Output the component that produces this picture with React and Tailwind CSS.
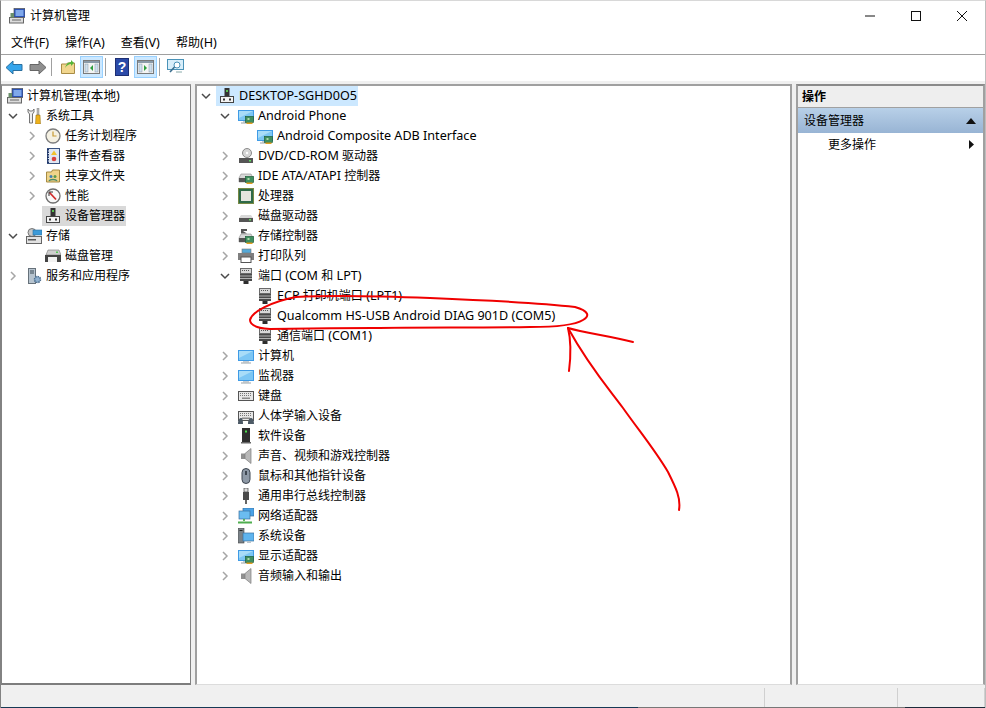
// App.jsx - 计算机管理 / 设备管理器
const Chevron = ({ open }) =>
  open ? (
    <svg width="10" height="10" viewBox="0 0 10 10" className="shrink-0">
      <path d="M1 3l4 4 4-4" fill="none" stroke="#4a4a4a" strokeWidth="1.5" />
    </svg>
  ) : (
    <svg width="10" height="10" viewBox="0 0 10 10" className="shrink-0">
      <path d="M3 1l4 4-4 4" fill="none" stroke="#a6a6a6" strokeWidth="1.5" />
    </svg>
  )

const Chip = () => (
  <g>
    <rect x="7.500" y="8.500" width="8" height="6" fill="#3f8f5f" stroke="#1f5f3a" strokeWidth=".7" />
    <rect x="8.500" y="14.500" width="6" height="1.500" fill="#e0a020" />
    <rect x="9.500" y="10" width="2" height="2" fill="#a8d8a8" />
  </g>
)

const Screen = () => (
  <g>
    <rect x="0" y="2" width="16" height="11" fill="#3f9be6" />
    <rect x="1" y="3" width="14" height="9" fill="#7cc6f4" />
    <path d="M1 3h14L1 10z" fill="#a8dcf8" />
    <rect x="5" y="13" width="6" height="1.500" fill="#c3ccd2" />
    <rect x="3" y="14.500" width="10" height="1" fill="#9aa3aa" />
  </g>
)

const Port = () => (
  <g>
    <rect x="2.500" y=".5" width="11" height="5" fill="#d8d8d8" stroke="#6a6a6a" />
    <path d="M4 2.500h8" stroke="#555" strokeDasharray="1 1" />
    <rect x="2" y="6" width="12" height="7" fill="#4a4a4a" />
    <path d="M2 8h12M2 10.500h12" stroke="#b0b0b0" />
    <rect x="5.500" y="13" width="5" height="3" fill="#2e2e2e" />
  </g>
)

const Host = () => (
  <g>
    <rect x="5.500" y="0" width="5" height="8" fill="#333" />
    <rect x="7" y="2" width="2" height="2" fill="#58c050" />
    <rect x="1.500" y="8.500" width="13" height="6" fill="#f4f4f4" stroke="#444" />
    <rect x="4" y="10.500" width="2" height="2" fill="#333" />
    <rect x="10" y="10.500" width="2" height="2" fill="#333" />
  </g>
)

const Drive = () => (
  <g>
    <path d="M3 6h10l2 4v4H1v-4z" fill="#d8d8d8" stroke="#8a8a8a" strokeWidth=".6" />
    <rect x="1" y="10" width="14" height="4" fill="#555" />
    <rect x="11" y="11" width="2" height="1.500" fill="#5fdc5f" />
  </g>
)

const Speaker = () => (
  <g>
    <rect x="3" y="5.500" width="4" height="5.500" fill="#8f8f8f" />
    <path d="M7 5.500l6-5v15l-6-5z" fill="#b8b8b8" stroke="#7d7d7d" strokeWidth=".7" />
  </g>
)

const Keys = () => (
  <g>
    <rect x=".5" y="3.500" width="15" height="9" fill="#e6e6e6" stroke="#555" />
    <path d="M2 5.500h12M2 7.500h12" stroke="#777" strokeDasharray="1 1" />
    <rect x="4" y="9.500" width="8" height="1.500" fill="#8a8a8a" />
  </g>
)

const shapes = {
  computer: (
    <g>
      <rect x="5" y=".5" width="11" height="9" fill="#2a52b8" stroke="#555" strokeWidth=".7" />
      <rect x="6.500" y="2" width="8" height="6" fill="#7fa8ea" />
      <rect x=".5" y="9.500" width="14" height="5.500" fill="#dcdcdc" stroke="#666" />
      <rect x="1.500" y="5" width="3.500" height="4.500" fill="#6a8f6a" />
      <rect x="3" y="11.500" width="9" height="1" fill="#666" />
    </g>
  ),
  tools: (
    <g>
      <path d="M2 1v3l1.500 2v9h3V6L8 4V1L6.500 3h-3z" fill="#eee" stroke="#666" strokeWidth=".9" />
      <rect x="11" y="0" width="2" height="7" fill="#b8b8b8" stroke="#777" strokeWidth=".4" />
      <path d="M10 7h4l.5 9h-5z" fill="#eeb11b" stroke="#8f6a10" strokeWidth=".5" />
    </g>
  ),
  clock: (
    <g>
      <circle cx="8" cy="8" r="7" fill="#f4f0e2" stroke="#7d7d7d" strokeWidth="1.3" />
      <path d="M8 3.500V8h3.500" fill="none" stroke="#c79a32" strokeWidth="1.200" />
    </g>
  ),
  log: (
    <g>
      <rect x="2.500" y=".5" width="12" height="15" fill="#dfe7f3" stroke="#39527f" />
      <path d="M3 1v14" stroke="#1f3569" strokeWidth="2" strokeDasharray="1.500 1" />
      <path d="M9 2.500l3 4.500H6z" fill="#f1c22e" />
      <circle cx="9" cy="11" r="2.300" fill="#d9433f" />
    </g>
  ),
  share: (
    <g>
      <path d="M1.500 4h5l1-2h7v12h-13z" fill="#efd48a" stroke="#a58a42" />
      <circle cx="6" cy="8.500" r="1.500" fill="#3f7fb5" />
      <circle cx="10" cy="8.500" r="1.500" fill="#5a9a4a" />
      <path d="M4 13c1-2 7-2 8 0" fill="none" stroke="#4a8a6a" strokeWidth="1.400" />
    </g>
  ),
  perf: (
    <g>
      <circle cx="8" cy="8" r="7" fill="#f8f8f8" stroke="#6e6e6e" strokeWidth="1.300" />
      <path d="M4.500 4.500l6.500 7" stroke="#d02b2b" strokeWidth="1.800" />
      <path d="M4 8V4h4" fill="none" stroke="#333" />
    </g>
  ),
  host: <Host />,
  storage: (
    <g>
      <circle cx="6" cy="4.500" r="4" fill="#c8c8c8" stroke="#777" />
      <rect x="7" y="2" width="9" height="5" fill="#3d9ad8" stroke="#2d6f9f" strokeWidth=".6" />
      <rect x=".5" y="8.500" width="15" height="7" fill="#e2e2e2" stroke="#666" />
      <rect x="2" y="11" width="8" height="1.500" fill="#5a5a5a" />
    </g>
  ),
  disk: (
    <g>
      <path d="M3 2h11l2 5H1z" fill="#cfcfcf" stroke="#777" strokeWidth=".6" />
      <rect x="11" y="3.500" width="2" height="1.500" fill="#55c855" />
      <rect x="0" y="7" width="16" height="7" fill="#444" />
      <rect x="3" y="9" width="9" height="5" fill="#f2f2f2" />
    </g>
  ),
  services: (
    <g>
      <rect x="2.500" y=".5" width="7" height="15" fill="#b7c4cf" stroke="#66717a" />
      <path d="M4 3h4M4 5h4" stroke="#3a4a55" />
      <circle cx="11.500" cy="11.500" r="3" fill="#8fb0cf" stroke="#4d6f8f" strokeWidth="1.500" strokeDasharray="1.500 .8" />
    </g>
  ),
  adapter: (
    <g>
      <Screen />
      <Chip />
    </g>
  ),
  dvd: (
    <g>
      <circle cx="9" cy="5" r="4.500" fill="#d6d6d6" stroke="#8a8a8a" />
      <circle cx="9" cy="5" r="1.200" fill="#fff" />
      <rect x="1" y="10" width="14" height="5" fill="#555" />
      <rect x="11" y="12" width="2" height="1.500" fill="#5fdc5f" />
    </g>
  ),
  ide: (
    <g>
      <Drive />
      <Chip />
    </g>
  ),
  cpu: (
    <g>
      <rect x="0" y="0" width="16" height="16" fill="#2f6a48" />
      <rect x=".5" y=".5" width="15" height="15" fill="none" stroke="#c0a840" strokeDasharray="1 1" />
      <rect x="3" y="3" width="10" height="10" fill="#e4e4de" />
    </g>
  ),
  drive: (
    <g>
      <path d="M3 7h10l2 3v4H1v-4z" fill="#d8d8d8" />
      <rect x="1" y="10" width="14" height="4" fill="#555" />
      <rect x="11" y="11" width="2" height="1.500" fill="#5fdc5f" />
    </g>
  ),
  storagectl: (
    <g>
      <path d="M3 1h6v2H5l4 2.500H3z" fill="#555" />
      <Drive />
      <Chip />
    </g>
  ),
  printer: (
    <g>
      <rect x="4" y="1" width="9" height="4" fill="#55a9d8" stroke="#777" strokeWidth=".6" />
      <rect x="0" y="5" width="16" height="7" fill="#7f7f7f" />
      <rect x="3" y="9" width="10" height="5.500" fill="#fff" stroke="#555" />
    </g>
  ),
  port: <Port />,
  pc: <Screen />,
  monitor: <Screen />,
  keyboard: <Keys />,
  hid: (
    <g>
      <Keys />
      <path d="M0 16c0-5 2-6 3-6s2 1 2 6zM10 16c0-5 2-6 3-6s3 1 3 6z" fill="#4d5a66" />
    </g>
  ),
  soft: (
    <g>
      <rect x="4" y="0" width="8" height="14" fill="#2e2e2e" />
      <rect x="7" y="2.500" width="2" height="2" fill="#4be04b" />
      <rect x="3" y="14" width="10" height="1.500" fill="#666" />
    </g>
  ),
  speaker: <Speaker />,
  mouse: (
    <g>
      <rect x="4" y=".5" width="8" height="15" rx="4" fill="#8e99a6" stroke="#3e4650" />
      <rect x="7" y="3" width="2" height="4" fill="#3e4650" />
    </g>
  ),
  usb: (
    <g>
      <rect x="6" y="0" width="4" height="4" fill="#dcdcdc" stroke="#444" strokeWidth=".7" />
      <rect x="5" y="4" width="6" height="8" fill="#4a4a4a" />
      <rect x="7" y="12" width="2" height="4" fill="#666" />
    </g>
  ),
  network: (
    <g>
      <rect x="5" y="0" width="11" height="8" fill="#4aa3e8" stroke="#3a6f9f" strokeWidth=".7" />
      <rect x="1" y="3" width="11" height="8" fill="#6bbcf0" stroke="#3a6f9f" strokeWidth=".7" />
      <path d="M6 11v2M0 14.500h14" stroke="#4fae4f" strokeWidth="1.800" />
    </g>
  ),
  system: (
    <g>
      <rect x="0" y="0" width="6" height="15" fill="#7a8288" stroke="#444" strokeWidth=".6" />
      <rect x="1.500" y="2" width="3" height="1" fill="#222" />
      <rect x="5" y="5" width="11" height="8" fill="#5fb4ee" stroke="#3a6f9f" strokeWidth=".7" />
      <rect x="9" y="13" width="4" height="2" fill="#b9c4cc" />
    </g>
  ),
}

const Icon = ({ name }) => (
  <svg width="16" height="16" viewBox="0 0 16 16" className="shrink-0">
    {shapes[name]}
  </svg>
)

// the latin part of a label runs larger than the CJK part in the screenshot
const L = ({ children }) => <span className="text-[12.6px] leading-none">{children}</span>

const levels = { 1: 'pl-[23px]', 2: 'pl-[42px]' }
const sideLevels = { 0: 'pl-[5px]', 1: 'pl-[6px]', 2: 'pl-[25px]' }

function Row({ level, pad, open, leaf, noSlot, selected, icon, children }) {
  return (
    <div className={`flex h-5 items-center whitespace-nowrap ${pad[level]}`}>
      {!noSlot && <span className="flex w-[18px] shrink-0 items-center">{!leaf && <Chevron open={open} />}</span>}
      <span className={`flex h-5 items-center ${selected ? '-ml-[3px] bg-[#d9d9d9] pr-px pl-[3px]' : ''}`}>
        <Icon name={icon} />
        <span className="ml-1">{children}</span>
      </span>
    </div>
  )
}

const sideTree = [
  { level: 0, noSlot: true, icon: 'computer', text: <>计算机管理<L>(本地)</L></> },
  { level: 1, open: true, icon: 'tools', text: '系统工具' },
  { level: 2, icon: 'clock', text: '任务计划程序' },
  { level: 2, icon: 'log', text: '事件查看器' },
  { level: 2, icon: 'share', text: '共享文件夹' },
  { level: 2, icon: 'perf', text: '性能' },
  { level: 2, leaf: true, selected: true, icon: 'host', text: '设备管理器' },
  { level: 1, open: true, icon: 'storage', text: '存储' },
  { level: 2, leaf: true, icon: 'disk', text: '磁盘管理' },
  { level: 1, icon: 'services', text: '服务和应用程序' },
]

const devices = [
  { level: 1, open: true, icon: 'adapter', text: <L>Android Phone</L> },
  { level: 2, leaf: true, icon: 'adapter', text: <L>Android Composite ADB Interface</L> },
  { level: 1, icon: 'dvd', text: <><L>DVD/CD-ROM </L>驱动器</> },
  { level: 1, icon: 'ide', text: <><L>IDE ATA/ATAPI </L>控制器</> },
  { level: 1, icon: 'cpu', text: '处理器' },
  { level: 1, icon: 'drive', text: '磁盘驱动器' },
  { level: 1, icon: 'storagectl', text: '存储控制器' },
  { level: 1, icon: 'printer', text: '打印队列' },
  { level: 1, open: true, icon: 'port', text: <>端口<L> (COM </L>和<L> LPT)</L></> },
  { level: 2, leaf: true, icon: 'port', text: <><L>ECP </L>打印机端口<L> (LPT1)</L></> },
  { level: 2, leaf: true, icon: 'port', text: <L>Qualcomm HS-USB Android DIAG 901D (COM5)</L> },
  { level: 2, leaf: true, icon: 'port', text: <>通信端口<L> (COM1)</L></> },
  { level: 1, icon: 'pc', text: '计算机' },
  { level: 1, icon: 'monitor', text: '监视器' },
  { level: 1, icon: 'keyboard', text: '键盘' },
  { level: 1, icon: 'hid', text: '人体学输入设备' },
  { level: 1, icon: 'soft', text: '软件设备' },
  { level: 1, icon: 'speaker', text: '声音、视频和游戏控制器' },
  { level: 1, icon: 'mouse', text: '鼠标和其他指针设备' },
  { level: 1, icon: 'usb', text: '通用串行总线控制器' },
  { level: 1, icon: 'network', text: '网络适配器' },
  { level: 1, icon: 'system', text: '系统设备' },
  { level: 1, icon: 'adapter', text: '显示适配器' },
  { level: 1, icon: 'speaker', text: '音频输入和输出' },
]

const ToolBtn = ({ active, children }) => (
  <span
    className={`flex h-[22px] w-[23px] items-center justify-center border ${
      active ? 'border-[#99d1ff] bg-[#cce8ff]' : 'border-transparent'
    }`}
  >
    {children}
  </span>
)

const Sep = () => <span className="mt-[2px] mr-[3px] ml-px h-[18px] w-px bg-[#a0a0a0]" />

const PaneIcon = ({ right }) => (
  <svg width="17" height="16" viewBox="0 0 17 16">
    <rect x=".5" y="1.500" width="16" height="13" fill="#f4f4f4" stroke="#7a7a7a" />
    <rect x="1" y="2" width="15" height="2" fill="#8a9aa8" />
    <rect x="2" y="5" width="3" height="8" fill="#cfe0ee" stroke="#8a9aa8" strokeWidth=".5" />
    <rect x="12" y="5" width="3" height="8" fill="#cfe0ee" stroke="#8a9aa8" strokeWidth=".5" />
    <path d={right ? 'M7 6l3 3-3 3z' : 'M10 6l-3 3 3 3z'} fill="#2f9e3f" />
  </svg>
)

export default function App() {
  return (
    <div className="relative flex h-[708px] w-[986px] flex-col overflow-hidden border-t border-r border-l border-t-[#d8d8d8] border-r-[#bdbdbd] border-l-[#828282] bg-[#f0f0f0] font-['Noto_Sans','Noto_Sans_CJK_SC',sans-serif] text-xs leading-5 text-black">
      {/* title bar */}
      <div className="flex h-[30px] shrink-0 items-center bg-white pl-2">
        <Icon name="computer" />
        <span className="ml-[5px]">计算机管理</span>
        <div className="ml-auto flex items-center">
          <svg width="46" height="16" viewBox="0 0 46 16"><path d="M18 8h10" stroke="#111" /></svg>
          <svg width="46" height="16" viewBox="0 0 46 16"><rect x="18.500" y="3.500" width="9" height="9" fill="none" stroke="#111" /></svg>
          <svg width="46" height="16" viewBox="0 0 46 16"><path d="M18 3l10 10M28 3L18 13" stroke="#111" fill="none" /></svg>
        </div>
      </div>

      {/* menu */}
      <div className="flex h-6 shrink-0 items-center gap-4 border-b border-[#a0a0a0] bg-white pl-[10px]">
        <span>文件<L>(F)</L></span>
        <span>操作<L>(A)</L></span>
        <span>查看<L>(V)</L></span>
        <span>帮助<L>(H)</L></span>
      </div>

      {/* toolbar */}
      <div className="flex h-[26px] shrink-0 items-start gap-px bg-white pt-px pl-px">
        <ToolBtn>
          <svg width="18" height="15" viewBox="0 0 18 15"><path d="M1 7.500l7-6.500v3.500h9v6H8V14z" fill="#35a5ec" stroke="#2a6f9f" /></svg>
        </ToolBtn>
        <ToolBtn>
          <svg width="18" height="15" viewBox="0 0 18 15"><path d="M17 7.500L10 1v3.500H1v6h9V14z" fill="#8f8f8f" stroke="#666" /></svg>
        </ToolBtn>
        <Sep />
        <ToolBtn>
          <svg width="16" height="16" viewBox="0 0 16 16"><path d="M1.500 5h5l1-1h7v10.500h-13z" fill="#f1d68e" stroke="#a98c45" /><path d="M5 9c1-4 3-6 6-6V1l3 3-3 3V5c-2 0-4 1-6 4z" fill="#55b53a" /></svg>
        </ToolBtn>
        <ToolBtn active><PaneIcon /></ToolBtn>
        <Sep />
        <ToolBtn>
          <svg width="14" height="18" viewBox="0 0 14 18"><rect x=".5" y=".5" width="13" height="17" fill="#2b4aa8" stroke="#1d2f73" /><text x="7" y="14" textAnchor="middle" fontSize="14" fontWeight="700" fill="#fff" fontFamily="Liberation Sans">?</text></svg>
        </ToolBtn>
        <ToolBtn active><PaneIcon right /></ToolBtn>
        <Sep />
        <ToolBtn>
          <svg width="17" height="16" viewBox="0 0 17 16"><rect x=".5" y=".5" width="16" height="10" fill="#d8eefa" stroke="#4a93b8" /><circle cx="10" cy="6" r="3" fill="#fff" stroke="#4a93b8" /><path d="M7.500 8L3 13" stroke="#3b6f8f" strokeWidth="1.600" /><path d="M9 13h6" stroke="#8aa" /></svg>
        </ToolBtn>
      </div>

      {/* panes */}
      <div className="flex min-h-0 flex-1 gap-1 pt-[3px] pb-px">
        <div className="w-[190px] shrink-0 overflow-hidden border-t-2 border-r border-b-2 border-l border-t-[#a0a0a0] border-r-[#828282] border-b-[#7d7d7d] border-l-[#828282] bg-white">
          {sideTree.map((r, i) => (
            <Row key={i} pad={sideLevels} {...r}>
              {r.text}
            </Row>
          ))}
        </div>

        <div className="min-w-0 flex-1 border-x-2 border-t-2 border-b border-x-[#a0a0a0] border-t-[#a0a0a0] border-b-[#dcdcdc] bg-white">
          <div className="flex h-5 items-center pl-[4px] whitespace-nowrap">
            <span className="flex w-[15px] shrink-0 items-center"><Chevron open /></span>
            <span className="flex h-5 items-center bg-[#cce8ff] pr-px pl-[3px]">
              <Icon name="host" />
              <span className="ml-1"><L>DESKTOP-SGHD0O5</L></span>
            </span>
          </div>
          {devices.map((r, i) => (
            <Row key={i} pad={levels} {...r}>
              {r.text}
            </Row>
          ))}
        </div>

        <div className="flex w-[189px] shrink-0 flex-col border-x-2 border-t-2 border-b border-x-[#a0a0a0] border-t-[#8a8a8a] border-b-[#dcdcdc] bg-white">
          <div className="flex h-[22px] shrink-0 items-center border-b border-[#a0a0a0] bg-[#eeeeee] pl-[4px] font-bold">操作</div>
          <div className="flex h-[25px] shrink-0 items-center bg-gradient-to-b from-[#b8d0e8] to-[#98b4d4] pr-[7px] pl-[6px]">
            <span>设备管理器</span>
            <svg className="ml-auto" width="10" height="6" viewBox="0 0 10 6"><path d="M5 0l5 6H0z" fill="#111" /></svg>
          </div>
          <div className="flex h-[23px] shrink-0 items-center pr-[9px] pl-[30px]">
            <span>更多操作</span>
            <svg className="ml-auto" width="5" height="9" viewBox="0 0 5 9"><path d="M0 0l5 4.500L0 9z" fill="#111" /></svg>
          </div>
        </div>
      </div>

      {/* status bar */}
      <div className="flex h-[21px] shrink-0 justify-end bg-[#f0f0f0] pt-[2px]">
        <span className="w-[133px] border-l border-[#d0d0d0]" />
        <span className="w-[88px] border-x border-[#d0d0d0]" />
      </div>

      {/* bit of the desktop showing under the window */}
      <div className="flex h-px shrink-0">
        <span className="w-[637px] bg-[#163a55]" />
        <span className="flex-1 bg-[#777777]" />
        <span className="w-[80px] bg-[#1d2b3a]" />
      </div>

      {/* red pen annotation drawn on top of the screenshot */}
      <svg className="pointer-events-none absolute -top-px -left-px" width="986" height="708" viewBox="0 0 986 708" fill="none" stroke="#f00000" strokeWidth="2" strokeLinecap="round" strokeLinejoin="round">
        <path d="M296 297C270 302 252 312 250 320C250 325 256 328 270 329C300 329 340 328 373 328C420 327 480 328 530 327C555 327 575 325 583 320C590 316 589 311 575 307C540 303 480 300 430 298C380 296 330 295 296 297" />
        <path d="M568 328C590 368 610 390 623 408C640 432 655 450 668 472C676 488 681 498 679 510" />
        <path d="M568 328C585 333 610 336 633 342" />
        <path d="M568 328C571 340 571 355 569 371" />
      </svg>
    </div>
  )
}
